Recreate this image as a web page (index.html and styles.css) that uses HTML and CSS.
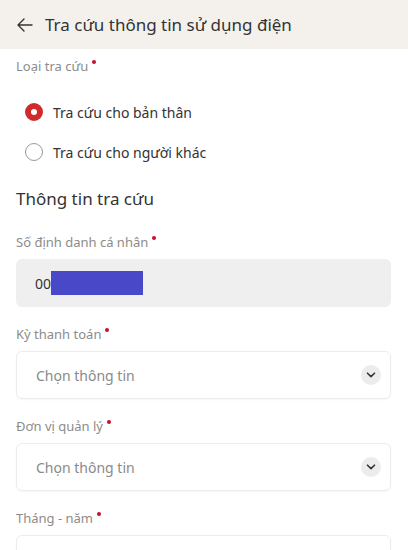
FILE: index.html
```html
<!DOCTYPE html>
<html lang="vi">
<head>
<meta charset="utf-8">
<link rel="stylesheet" href="styles.css">
</head>
<body>
<header class="topbar">
  <svg class="back" width="16" height="14" viewBox="0 0 16 14"><path d="M15 7H1.5M7 1L1 7l6 6" fill="none" stroke="#333" stroke-width="1.4" stroke-linecap="round" stroke-linejoin="round"/></svg>
  <h1 class="title">Tra cứu thông tin sử dụng điện</h1>
</header>
<main class="content">
  <div class="label label-first">Loại tra cứu <span class="req"></span></div>
  <div class="radios">
    <div class="radio-row"><span class="radio checked"></span><span>Tra cứu cho bản thân</span></div>
    <div class="radio-row"><span class="radio"></span><span>Tra cứu cho người khác</span></div>
  </div>
  <h2 class="section">Thông tin tra cứu</h2>
  <div class="field">
    <div class="label">Số định danh cá nhân <span class="req"></span></div>
    <div class="box box-filled"><span class="value">00</span><span class="mask"></span></div>
  </div>
  <div class="field">
    <div class="label">Kỳ thanh toán <span class="req"></span></div>
    <div class="box box-select"><span class="placeholder">Chọn thông tin</span><span class="chev"><svg width="10" height="6" viewBox="0 0 10 6"><path d="M1.5 1.2L5 4.6l3.5-3.4" fill="none" stroke="#333" stroke-width="1.6" stroke-linecap="round" stroke-linejoin="round"/></svg></span></div>
  </div>
  <div class="field">
    <div class="label">Đơn vị quản lý <span class="req"></span></div>
    <div class="box box-select"><span class="placeholder">Chọn thông tin</span><span class="chev"><svg width="10" height="6" viewBox="0 0 10 6"><path d="M1.5 1.2L5 4.6l3.5-3.4" fill="none" stroke="#333" stroke-width="1.6" stroke-linecap="round" stroke-linejoin="round"/></svg></span></div>
  </div>
  <div class="field">
    <div class="label">Tháng - năm <span class="req"></span></div>
    <div class="box box-select"></div>
  </div>
</main>
</body>
</html>
```

FILE: styles.css
```css
html, body {
  margin: 0;
  padding: 0;
  background: #ffffff;
  font-family: "Noto Sans", "Open Sans", sans-serif;
  color: #333333;
  overflow: hidden;
  height: 550px;
}

.topbar {
  height: 49px;
  background: #f4f1ed;
  display: flex;
  align-items: center;
  padding-left: 17px;
  gap: 12px;
}

.back {
  display: block;
}

.title {
  margin: 0;
  font-size: 17px;
  font-weight: 400;
  color: #333333;
  line-height: 24px;
}

.content {
  padding: 0 16px 0 16px;
}

.label {
  font-size: 13px;
  line-height: 20px;
  color: #8c8c8c;
  display: flex;
  align-items: flex-start;
}

.label-first {
  margin-top: 7px;
}

.req {
  width: 4px;
  height: 4px;
  border-radius: 50%;
  background: #c8102e;
  margin-left: 4px;
  margin-top: 4px;
}

.radios {
  margin-top: 16px;
  display: flex;
  flex-direction: column;
}

.radio-row {
  height: 40px;
  display: flex;
  align-items: center;
  gap: 10px;
  padding-left: 9px;
  font-size: 14px;
  color: #333333;
}

.radio {
  width: 18px;
  height: 18px;
  box-sizing: border-box;
  border-radius: 50%;
  border: 1.3px solid #9a9a9a;
  background: #fff;
}

.radio.checked {
  border: 6px solid #d02b2b;
}

.section {
  margin: 15px 0 0 0;
  font-size: 17px;
  font-weight: 400;
  line-height: 24px;
  color: #333333;
}

.field {
  margin-top: 17px;
  display: flex;
  flex-direction: column;
  gap: 7px;
}

.section + .field {
  margin-top: 21px;
}

.box {
  height: 48px;
  flex-shrink: 0;
  box-sizing: border-box;
  border-radius: 6px;
  display: flex;
  align-items: center;
  width: 375px;
}

.box-filled {
  background: #efefef;
  padding-left: 19px;
}

.value {
  font-size: 14px;
  color: #333;
}

.mask {
  width: 92px;
  height: 24px;
  background: #4848c8;
}

.box-select {
  border: 1px solid #ececec;
  box-shadow: 0 1px 2px rgba(0, 0, 0, 0.04);
  padding-left: 19px;
  padding-right: 9px;
  justify-content: space-between;
}

.placeholder {
  font-size: 14px;
  color: #8a8a8a;
}

.chev {
  width: 20px;
  height: 20px;
  border-radius: 50%;
  background: #ececec;
  display: flex;
  align-items: center;
  justify-content: center;
}
```
